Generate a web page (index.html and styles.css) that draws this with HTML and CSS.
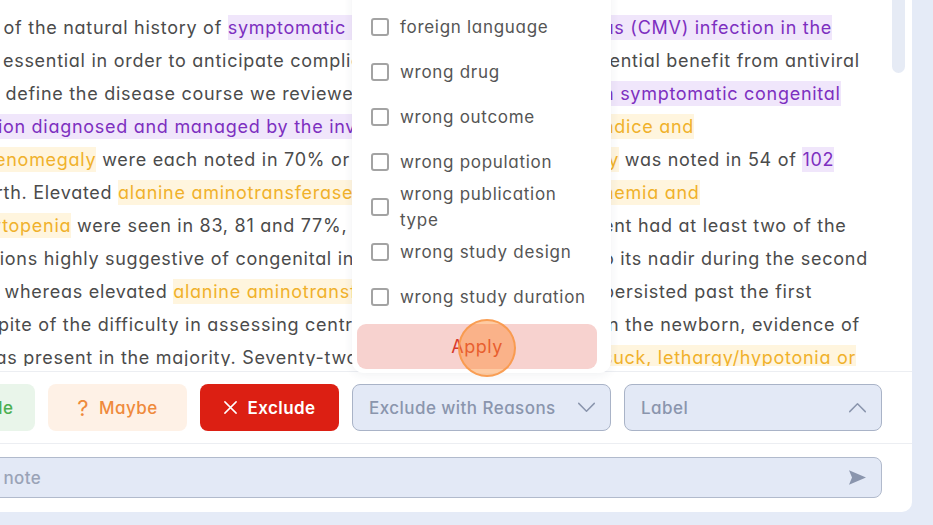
FILE: index.html
```html
<!DOCTYPE html>
<html lang="en">
<head>
<meta charset="utf-8">
<title>Screening</title>
<link rel="stylesheet" href="styles.css">
</head>
<body>
<div class="page">
  <div class="card">
    <div class="reader">
      <div class="text">
        <div class="ln"><span class="l">Knowledge of the natural history of <span class="hp">symptomatic congenital cytomegalovir</span></span><span class="r"><span class="hp">us (CMV) infection in the</span></span></div>
        <div class="ln"><span class="l">newborn is essential in order to anticipate complications and to evaluate pot</span><span class="r">tential benefit from antiviral</span></div>
        <div class="ln"><span class="l">therapy. To define the disease course we reviewed the records of 106 infants wit</span><span class="r"><span class="hp">n symptomatic congenital</span></span></div>
        <div class="ln"><span class="l"><span class="hp">CMV infection diagnosed and managed by the investigators.</span> Petechiae, <span class="ho">jau</span></span><span class="r"><span class="ho">ndice and</span></span></div>
        <div class="ln"><span class="l in-8"><span class="ho">hepatosplenomegaly</span> were each noted in 70% or more of the infants; <span class="ho">microcephal</span></span><span class="r"><span class="ho">ly</span> was noted in 54 of <span class="hp">102</span></span></div>
        <div class="ln"><span class="l out-10">infants at birth. Elevated <span class="ho">alanine aminotransferase</span>, <span class="ho">conjugated hyperbilirubi</span></span><span class="r"><span class="ho">nemia and</span></span></div>
        <div class="ln"><span class="l in-8"><span class="ho">thrombocytopenia</span> were seen in 83, 81 and 77%, respectively. Each patie</span><span class="r">ent had at least two of the</span></div>
        <div class="ln"><span class="l in-6">manifestations highly suggestive of congenital infection. Thrombocytopenia declined t</span><span class="r">o its nadir during the second</span></div>
        <div class="ln"><span class="l out-10">week of life, whereas elevated <span class="ho">alanine aminotransferase</span> and <span class="ho">hyperbilirubinemia</span></span><span class="r"> persisted past the first</span></div>
        <div class="ln"><span class="l">month. In spite of the difficulty in assessing central nervous system involvement i</span><span class="r">in the newborn, evidence of</span></div>
        <div class="ln"><span class="l out-32">involvement was present in the majority. Seventy-two percent had poor s</span><span class="r"><span class="ho">suck, lethargy/hypotonia or</span></span></div>
        <div class="ln"><span class="l">seizures. Mortality during the neonatal period was about 12 percent overall</span><span class="r">and occurred mostly in</span></div>
      </div>
      <div class="scroll"><div class="thumb"></div></div>
    </div>

    <div class="actions">
      <button class="btn include">
        <svg class="ico" viewBox="0 0 16 16" width="16" height="16"><path d="M2 8.5l4 4 8-9" fill="none" stroke="currentColor" stroke-width="1.8" stroke-linecap="round" stroke-linejoin="round"/></svg>
        <span>Include</span>
      </button>
      <button class="btn maybe"><span class="q">?</span><span>Maybe</span></button>
      <button class="btn exclude">
        <svg class="ico" viewBox="0 0 16 16" width="15" height="15"><path d="M2 2l12 12M14 2L2 14" fill="none" stroke="currentColor" stroke-width="1.6" stroke-linecap="round"/></svg>
        <span>Exclude</span>
      </button>
      <div class="dd-wrap">
        <div class="popup">
          <label class="opt"><span class="cb"></span><span class="ot">background article</span></label>
          <label class="opt"><span class="cb"></span><span class="ot">foreign language</span></label>
          <label class="opt"><span class="cb"></span><span class="ot">wrong drug</span></label>
          <label class="opt"><span class="cb"></span><span class="ot">wrong outcome</span></label>
          <label class="opt"><span class="cb"></span><span class="ot">wrong population</span></label>
          <label class="opt"><span class="cb"></span><span class="ot">wrong publication type</span></label>
          <label class="opt"><span class="cb"></span><span class="ot">wrong study design</span></label>
          <label class="opt"><span class="cb"></span><span class="ot">wrong study duration</span></label>
          <button class="apply">Apply<span class="click"></span></button>
        </div>
        <button class="select">
          <span>Exclude with Reasons</span>
          <svg viewBox="0 0 20 12" width="19" height="11"><path d="M1.5 1.5l8.5 8.5 8.5-8.5" fill="none" stroke="currentColor" stroke-width="1.6" stroke-linecap="round" stroke-linejoin="round"/></svg>
        </button>
      </div>
      <button class="select label">
        <span>Label</span>
        <svg viewBox="0 0 20 12" width="19" height="11"><path d="M1.5 10.5l8.5-8.5 8.5 8.5" fill="none" stroke="currentColor" stroke-width="1.6" stroke-linecap="round" stroke-linejoin="round"/></svg>
      </button>
    </div>

    <div class="note-row">
      <div class="note">
        <span class="ph">Type your note</span>
        <svg class="send" viewBox="0 0 20 18" width="19" height="17"><path d="M1 1.2L19 9 1 16.8 4.2 9z" fill="currentColor"/></svg>
      </div>
    </div>
  </div>
</div>
</body>
</html>
```

FILE: styles.css
```css
* { box-sizing: border-box; }

html, body {
  margin: 0;
  height: 100%;
  overflow: hidden;
}

body {
  background: #e5ebf7;
  font-family: "Inter", "Noto Sans", sans-serif;
  font-feature-settings: "cv11" 1;
  color: #4b4b4b;
}

.page {
  display: flex;
  height: 525px;
  padding: 0 21px 13px 0;
}

.card {
  flex: 1;
  margin-left: -130px;
  background: #fff;
  border-radius: 0 0 10px 0;
  display: flex;
  flex-direction: column;
}

/* ---------- reading area ---------- */
.reader {
  height: 372px;
  flex: none;
  display: flex;
  padding-bottom: 5px;
  border-bottom: 1px solid #eceef2;
}

.text {
  flex: 1;
  overflow: hidden;
  padding: 11px 0 0 26px;
  font-size: 18px;
  line-height: 33px;
  letter-spacing: 0.72px;
}

.ln {
  display: flex;
  white-space: nowrap;
}

.l {
  flex: none;
  width: 707px;
  overflow: hidden;
}

.l.in-8   { text-indent: 8px; }
.l.in-6   { text-indent: 6px; }
.l.out-10 { text-indent: -10px; }
.l.out-32 { text-indent: -32px; }

.r { flex: none; }

.hp {
  background: #f0e6fb;
  color: #7d2fc0;
  padding: 2px 0;
}

.ho {
  background: #fff5de;
  color: #f0b12b;
  padding: 2px 0;
}

.scroll {
  flex: none;
  width: 13px;
  margin: 0 7px 0 0;
}

.thumb {
  height: 73px;
  border-radius: 0 0 7px 7px;
  background: #e6ebf5;
}

/* ---------- action row ---------- */
.actions {
  flex: none;
  display: flex;
  gap: 13px;
  padding: 12px 30px 12px 26px;
  border-bottom: 1px solid #eceef2;
}

.btn, .select, .apply {
  font-family: inherit;
  font-feature-settings: "cv11" 1;
  cursor: pointer;
}

.btn {
  flex: none;
  height: 47px;
  border: 0;
  border-radius: 8px;
  display: flex;
  align-items: center;
  justify-content: center;
  gap: 9px;
  font-size: 17px;
  font-weight: 500;
  letter-spacing: 0.45px;
}

.include { width: 139px; background: #e9f5ea; color: #4caf50; gap: 12px; padding-left: 11px; }
.maybe   { width: 139px; background: #fef1e6; color: #ef8a3c; gap: 10px; }
.maybe .q { font-size: 22px; font-weight: 400; }
.exclude { width: 139px; background: #dc1f13; color: #fff; font-weight: 600; }

.dd-wrap {
  position: relative;
  flex: none;
  width: 259px;
}

.select {
  width: 259px;
  height: 47px;
  flex: none;
  display: flex;
  align-items: center;
  justify-content: space-between;
  padding: 0 14px 0 16px;
  background: #e3e9f6;
  border: 1px solid #a9b3c7;
  border-radius: 8px;
  color: #8a95ad;
  font-size: 17px;
  font-weight: 500;
  letter-spacing: 0.45px;
}

.select.label { width: 258px; }

/* ---------- popup ---------- */
.popup {
  position: absolute;
  left: 0;
  right: 0;
  bottom: calc(100% + 11px);
  background: #fff;
  border-radius: 12px;
  box-shadow: 0 2px 10px rgba(40, 50, 80, 0.07);
  padding: 0 14px 4px 5px;
  z-index: 5;
}

.opt {
  height: 45px;
  display: flex;
  align-items: center;
  gap: 11px;
  padding-left: 14px;
  font-size: 17px;
  line-height: 26px;
  letter-spacing: 0.7px;
  color: #555;
}

.cb {
  flex: none;
  width: 18px;
  height: 18px;
  border: 2px solid #a3a3a3;
  border-radius: 3px;
  background: #fff;
}

.ot { flex: 1; }

.apply {
  position: relative;
  display: block;
  width: 100%;
  height: 45px;
  margin-top: 4.5px;
  border: 0;
  border-radius: 9px;
  background: #f7d2cf;
  color: #d8392d;
  font-size: 18px;
  letter-spacing: 0.5px;
}

.click {
  position: absolute;
  left: 101px;
  top: -5px;
  width: 58px;
  height: 58px;
  border-radius: 50%;
  background: rgba(253, 140, 50, 0.45);
  border: 2px solid rgba(248, 150, 70, 0.85);
}

/* ---------- note ---------- */
.note-row {
  flex: none;
  padding: 13px 30px 14px 26px;
}

.note {
  height: 41px;
  display: flex;
  align-items: center;
  justify-content: space-between;
  padding: 0 14px 0 16px;
  background: #e3e9f6;
  border: 1px solid #b1bacc;
  border-radius: 8px;
}

.ph {
  color: #9aa3b7;
  font-size: 17px;
  font-weight: 500;
  letter-spacing: 0.45px;
}

.send { color: #8a95ad; }
```
